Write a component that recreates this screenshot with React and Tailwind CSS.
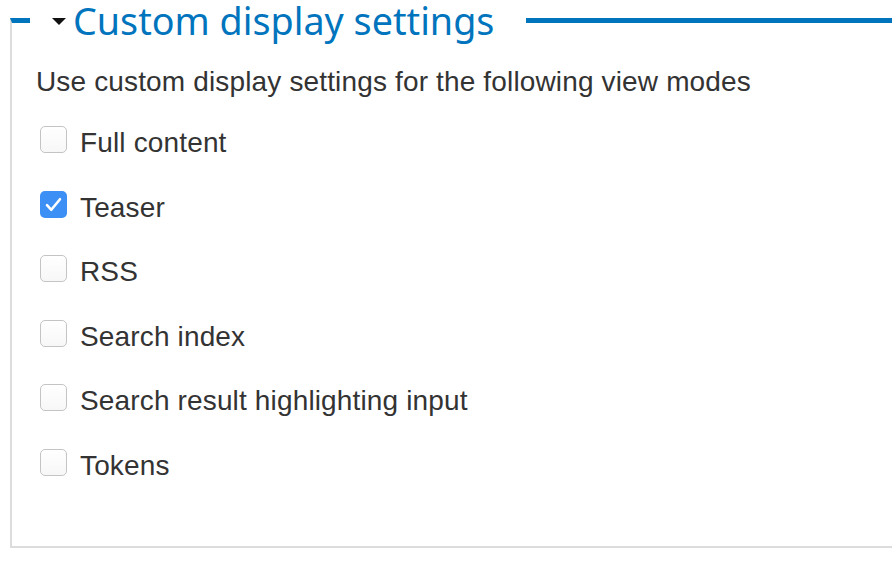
import React from "react";

const items = [
  { label: "Full content", checked: false },
  { label: "Teaser", checked: true },
  { label: "RSS", checked: false },
  { label: "Search index", checked: false },
  { label: "Search result highlighting input", checked: false },
  { label: "Tokens", checked: false },
];

function Box({ checked }) {
  if (checked) {
    return (
      <span className="block h-[27px] w-[27px] shrink-0 rounded-[5px] bg-[#3b8ff5]">
        <svg width="27" height="27" viewBox="0 0 27 27" fill="none">
          <path d="M7 14.2 L11.3 18.8 L20 8.2" stroke="white" strokeWidth="2.6" strokeLinecap="round" strokeLinejoin="round" />
        </svg>
      </span>
    );
  }
  return (
    <span className="block h-[27px] w-[27px] shrink-0 rounded-[5px] border border-[#c4c4c4] bg-gradient-to-b from-white to-[#f7f7f7]" />
  );
}

export default function App() {
  return (
    <div className="min-h-[570px] bg-white pl-[10px]" style={{ fontFamily: '"Liberation Sans", Arial, sans-serif' }}>
      <fieldset className="m-0 border-0 border-t-[5px] border-l-2 border-b-2 border-t-[#0074bd] border-l-[#dcdcdc] border-b-[#dcdcdc] px-[18px] pt-[20px] pb-[60px]">
        <legend className="flex items-start pl-[22px] pr-[32px] text-[#0074bd]">
          <svg className="mt-[18px] mr-[7px]" width="14" height="7" viewBox="0 0 14 7">
            <polygon points="0,0 14,0 7,7" fill="#111" />
          </svg>
          <span className="block text-[37.7px] leading-[41px]" style={{ fontFamily: '"Noto Sans", sans-serif' }}>
            Custom display settings
          </span>
        </legend>
        <div className="pl-[6px] text-[28px] leading-[40px] tracking-[0.15px] text-[#333]">
          <div className="pt-[1px]">Use custom display settings for the following view modes</div>
          <div className="mt-[21px] flex flex-col gap-[24.6px]">
            {items.map((it) => (
              <label key={it.label} className="flex items-start">
                <span className="ml-[4px] mt-[3px] mr-[13px]">
                  <Box checked={it.checked} />
                </span>
                <span>{it.label}</span>
              </label>
            ))}
          </div>
        </div>
      </fieldset>
    </div>
  );
}
